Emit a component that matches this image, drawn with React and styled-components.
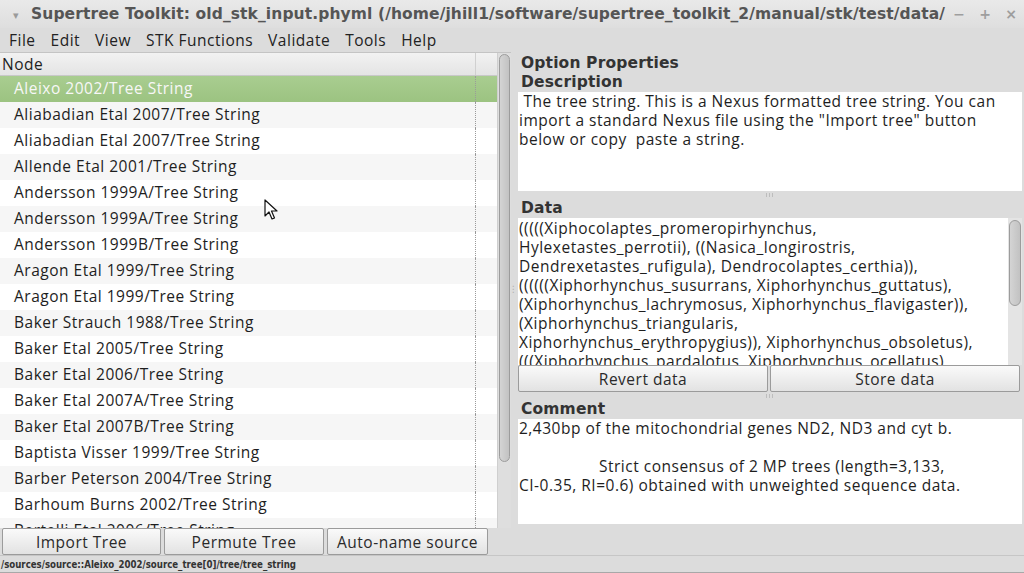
import React from "react";
import styled, { createGlobalStyle } from "styled-components";

const GlobalStyle = createGlobalStyle`
  html, body {
    margin: 0;
    padding: 0;
    background: #dcdcdc;
  }
  * {
    box-sizing: border-box;
  }
`;

const nodes = [
  "Aleixo 2002",
  "Aliabadian Etal 2007",
  "Aliabadian Etal 2007",
  "Allende Etal 2001",
  "Andersson 1999A",
  "Andersson 1999A",
  "Andersson 1999B",
  "Aragon Etal 1999",
  "Aragon Etal 1999",
  "Baker Strauch 1988",
  "Baker Etal 2005",
  "Baker Etal 2006",
  "Baker Etal 2007A",
  "Baker Etal 2007B",
  "Baptista Visser 1999",
  "Barber Peterson 2004",
  "Barhoum Burns 2002",
  "Bertelli Etal 2006",
];

const dataLines = [
  "(((((Xiphocolaptes_promeropirhynchus,",
  "Hylexetastes_perrotii), ((Nasica_longirostris,",
  "Dendrexetastes_rufigula), Dendrocolaptes_certhia)),",
  "((((((Xiphorhynchus_susurrans, Xiphorhynchus_guttatus),",
  "(Xiphorhynchus_lachrymosus, Xiphorhynchus_flavigaster)),",
  "(Xiphorhynchus_triangularis,",
  "Xiphorhynchus_erythropygius)), Xiphorhynchus_obsoletus),",
  "(((Xiphorhynchus_pardalotus, Xiphorhynchus_ocellatus),",
];

const menus = ["File", "Edit", "View", "STK Functions", "Validate", "Tools", "Help"];

export default function App() {
  return (
    <>
      <GlobalStyle />
      <Window>
        <TitleBar>
          <TitleArrow>▾</TitleArrow>
          <TitleText>
            Supertree Toolkit: old_stk_input.phyml
            (/home/jhill1/software/supertree_toolkit_2/manual/stk/test/data/
          </TitleText>
          <WinControls>
            <WinButton>−</WinButton>
            <WinButton>+</WinButton>
            <WinButton>×</WinButton>
          </WinControls>
        </TitleBar>

        <MenuBar>
          {menus.map((m) => (
            <MenuItem key={m}>{m}</MenuItem>
          ))}
        </MenuBar>

        <Body>
          <LeftPane>
            <TreeArea>
              <TreeView>
                <TreeHeader>
                  <HeaderCell>Node</HeaderCell>
                  <HeaderRest />
                </TreeHeader>
                <Rows>
                  {nodes.map((n, i) => (
                    <Row key={i} selected={i === 0} odd={i % 2 === 1}>
                      <RowLabel>{n}/Tree String</RowLabel>
                      <RowRest />
                    </Row>
                  ))}
                </Rows>
                <Cursor viewBox="0 0 14 22">
                  <path
                    d="M1 1 L1 17 L5 13 L8 20 L10.5 19 L7.5 12 L13 12 Z"
                    fill="#fff"
                    stroke="#111"
                    strokeWidth="1.2"
                    strokeLinejoin="round"
                  />
                </Cursor>
              </TreeView>
              <VScroll>
                <VThumb />
              </VScroll>
            </TreeArea>
            <ButtonRow>
              <Button width="159px">Import Tree</Button>
              <Button width="160px">Permute Tree</Button>
              <Button width="161px">Auto-name source</Button>
            </ButtonRow>
          </LeftPane>

          <PaneDivider>
            <Grip>⋮</Grip>
          </PaneDivider>

          <RightPane>
            <Heading>Option Properties</Heading>
            <Heading>Description</Heading>
            <TextBox height="99px">
              &nbsp;The tree string. This is a Nexus formatted tree string. You can
              import a standard Nexus file using the "Import tree" button below or
              copy&nbsp; paste a string.
            </TextBox>
            <Splitter>
              <i />
              <i />
              <i />
            </Splitter>
            <Heading>Data</Heading>
            <DataBox>
              <DataText>
                {dataLines.map((l, i) => (
                  <div key={i}>{l}</div>
                ))}
              </DataText>
              <DataScroll>
                <DataThumb />
              </DataScroll>
            </DataBox>
            <ButtonRow>
              <Button grow>Revert data</Button>
              <Button grow>Store data</Button>
            </ButtonRow>
            <Splitter>
              <i />
              <i />
              <i />
            </Splitter>
            <Heading>Comment</Heading>
            <TextBox height="105px">
              <div>2,430bp of the mitochondrial genes ND2, ND3 and cyt b.</div>
              <div>&nbsp;</div>
              <div>
                <Tab />
                Strict consensus of 2 MP trees (length=3,133,
              </div>
              <div>CI-0.35, RI=0.6) obtained with unweighted sequence data.</div>
            </TextBox>
          </RightPane>
        </Body>

        <StatusBar>
          <StatusText>/sources/source::Aleixo_2002/source_tree[0]/tree/tree_string</StatusText>
        </StatusBar>
      </Window>
    </>
  );
}

// styled components
const Window = styled.div`
  width: 1024px;
  height: 573px;
  display: flex;
  flex-direction: column;
  background: #dcdcdc;
  font-family: "Open Sans", "DejaVu Sans", sans-serif;
  letter-spacing: 0.5px;
  color: #1e1e1e;
  overflow: hidden;
`;

const TitleBar = styled.div`
  height: 28px;
  flex-shrink: 0;
  display: flex;
  align-items: center;
  padding: 0 0 0 13px;
  background: linear-gradient(#e9e9e9, #dedede);
  color: #555;
  letter-spacing: 0;
`;

const TitleArrow = styled.span`
  font-size: 11px;
  color: #9a9a9a;
  width: 18px;
  flex-shrink: 0;
`;

const TitleText = styled.div`
  font-family: "DejaVu Sans", sans-serif;
  font-weight: bold;
  font-size: 15.5px;
  letter-spacing: 0.1px;
  white-space: nowrap;
  overflow: hidden;
  flex: 1;
  min-width: 0;
`;

const WinControls = styled.div`
  flex-shrink: 0;
  width: 78px;
  display: flex;
  align-items: center;
`;

const WinButton = styled.span`
  width: 26px;
  flex-shrink: 0;
  text-align: center;
  font-family: "DejaVu Sans", sans-serif;
  font-weight: bold;
  font-size: 14px;
  line-height: 28px;
  color: #9e9e9e;
`;

const MenuBar = styled.div`
  height: 24px;
  flex-shrink: 0;
  display: flex;
  align-items: center;
  padding-left: 9px;
  gap: 15px;
  background: #dcdcdc;
`;

const MenuItem = styled.span`
  font-size: 15.5px;
  color: #222;
`;

const Body = styled.div`
  flex: 1;
  display: flex;
  min-height: 0;
`;

const LeftPane = styled.div`
  width: 511px;
  display: flex;
  flex-direction: column;
`;

const TreeArea = styled.div`
  flex: 1;
  display: flex;
  min-height: 0;
  background: #fff;
  border-top: 1px solid #c4c4c4;
`;

const TreeView = styled.div`
  position: relative;
  flex: 1;
  display: flex;
  flex-direction: column;
  overflow: hidden;
`;

const TreeHeader = styled.div`
  height: 23px;
  flex-shrink: 0;
  display: flex;
  background: linear-gradient(#f2f2f2, #e4e4e4);
  border-bottom: 1px solid #c8c8c8;
`;

const HeaderCell = styled.div`
  width: 476px;
  padding-left: 2px;
  font-size: 15.5px;
  line-height: 22px;
  border-right: 1px solid #d0d0d0;
`;

const HeaderRest = styled.div`
  flex: 1;
`;

const Rows = styled.div`
  display: flex;
  flex-direction: column;
`;

const Row = styled.div`
  height: 26px;
  flex-shrink: 0;
  display: flex;
  background: ${(p) =>
    p.selected
      ? "linear-gradient(#a9cd90, #9cc381)"
      : p.odd
      ? "#f6f6f6"
      : "#ffffff"};
  color: ${(p) => (p.selected ? "#f7f7f7" : "#1e1e1e")};
`;

const RowLabel = styled.div`
  width: 476px;
  padding-left: 14px;
  font-size: 15.5px;
  line-height: 25px;
  white-space: nowrap;
  border-right: 1px dotted #9a9a9a;
`;

const RowRest = styled.div`
  flex: 1;
`;

const Cursor = styled.svg`
  position: absolute;
  left: 264px;
  top: 146px;
  width: 14px;
  height: 22px;
`;

const VScroll = styled.div`
  width: 14px;
  background: #dedede;
  border-left: 1px solid #cfcfcf;
  padding: 1px 1px;
`;

const VThumb = styled.div`
  height: 408px;
  border: 1px solid #9c9c9c;
  border-radius: 6px;
  background: linear-gradient(90deg, #d4d4d4, #c2c2c2);
`;

const ButtonRow = styled.div`
  height: 27px;
  flex-shrink: 0;
  display: flex;
  gap: 2px;
  padding: 0 2px;
  background: #dcdcdc;
`;

const Button = styled.div`
  width: ${(p) => p.width || "auto"};
  flex: ${(p) => (p.grow ? 1 : "none")};
  margin-right: ${(p) => (p.grow ? 0 : "1px")};
  height: 27px;
  display: flex;
  align-items: center;
  justify-content: center;
  border: 1px solid #9b9b9b;
  border-radius: 2px;
  background: linear-gradient(#fafafa, #e2e2e2);
  font-size: 15.5px;
  color: #2a2a2a;
`;

const PaneDivider = styled.div`
  width: 5px;
  display: flex;
  align-items: center;
  justify-content: center;
  padding-bottom: 30px;
`;

const Grip = styled.span`
  font-size: 9px;
  color: #b0b0b0;
`;

const RightPane = styled.div`
  flex: 1;
  display: flex;
  flex-direction: column;
  padding: 2px 2px 0 0;
`;

const Heading = styled.div`
  font-family: "DejaVu Sans", sans-serif;
  font-weight: bold;
  font-size: 15.5px;
  letter-spacing: 0.15px;
  line-height: 19px;
  padding-left: 5px;
  color: #333;
`;

const TextBox = styled.div`
  height: ${(p) => p.height};
  flex-shrink: 0;
  margin-left: 2px;
  background: #fff;
  padding: 0 1px;
  font-size: 15.5px;
  line-height: 19px;
  overflow: hidden;
`;

const Tab = styled.span`
  display: inline-block;
  width: 80px;
`;

const Splitter = styled.div`
  height: 8px;
  flex-shrink: 0;
  display: flex;
  justify-content: center;
  align-items: center;
  gap: 2px;

  i {
    width: 1px;
    height: 4px;
    background: #bdbdbd;
  }
`;

const DataBox = styled.div`
  height: 147px;
  flex-shrink: 0;
  margin-left: 2px;
  display: flex;
  background: #fff;
`;

const DataText = styled.div`
  flex: 1;
  padding: 1px 1px 0;
  font-size: 15.5px;
  line-height: 19px;
  overflow: hidden;
  white-space: nowrap;
`;

const DataScroll = styled.div`
  width: 14px;
  background: #e4e4e4;
  padding: 2px 1px;
`;

const DataThumb = styled.div`
  height: 86px;
  border: 1px solid #9c9c9c;
  border-radius: 6px;
  background: linear-gradient(90deg, #d4d4d4, #c2c2c2);
`;

const StatusBar = styled.div`
  height: 18px;
  flex-shrink: 0;
  display: flex;
  align-items: center;
  padding-left: 1px;
  border-top: 1px solid #c6c6c6;
  border-bottom: 1px solid #a8a8a8;
  letter-spacing: 0;
`;

const StatusText = styled.span`
  font-family: "DejaVu Sans Condensed", "DejaVu Sans", sans-serif;
  font-weight: bold;
  font-size: 9.6px;
  color: #333;
`;
